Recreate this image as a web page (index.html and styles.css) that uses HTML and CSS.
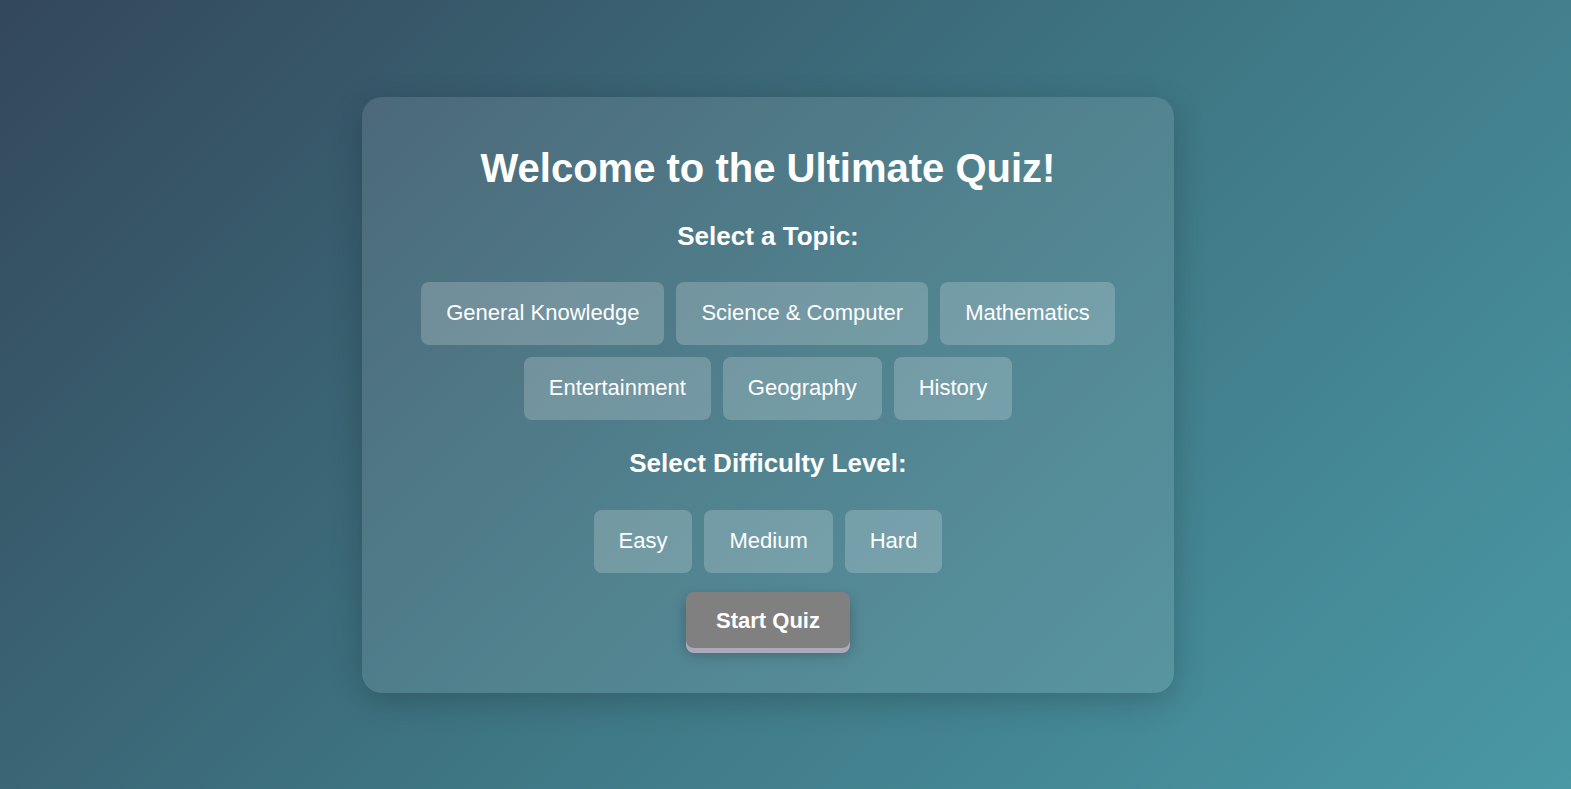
FILE: index.html
```html
<!DOCTYPE html>
<html lang="en">
<head>
<meta charset="utf-8">
<title>Ultimate Quiz</title>
<link rel="stylesheet" href="styles.css">
</head>
<body>
<div class="page">
  <div class="card">
    <h1 class="title">Welcome to the Ultimate Quiz!</h1>
    <h2 class="label">Select a Topic:</h2>
    <div class="options">
      <button class="opt">General Knowledge</button>
      <button class="opt">Science &amp; Computer</button>
      <button class="opt">Mathematics</button>
      <button class="opt">Entertainment</button>
      <button class="opt">Geography</button>
      <button class="opt">History</button>
    </div>
    <h2 class="label label-diff">Select Difficulty Level:</h2>
    <div class="options">
      <button class="opt">Easy</button>
      <button class="opt">Medium</button>
      <button class="opt">Hard</button>
    </div>
    <button class="start">Start Quiz</button>
  </div>
</div>
</body>
</html>
```
FILE: styles.css
```css
html, body {
  margin: 0;
  height: 100%;
}
body {
  background: linear-gradient(135deg, #33475b 0%, #3e7482 50%, #4a98a5 100%);
  font-family: "Liberation Sans", Arial, sans-serif;
  color: #fff;
}
.page {
  height: 100%;
  display: flex;
  align-items: center;
  justify-content: center;
  padding-right: 35px;
  box-sizing: border-box;
}
.card {
  width: 812px;
  box-sizing: border-box;
  padding: 40px;
  border-radius: 20px;
  background: rgba(255, 255, 255, 0.1);
  box-shadow: 0 8px 32px rgba(0, 0, 0, 0.2);
  display: flex;
  flex-direction: column;
  align-items: center;
  text-align: center;
}
.title {
  font-size: 40px;
  line-height: 46px;
  font-weight: bold;
  margin: 8px 0 0;
}
.label {
  font-size: 26px;
  line-height: 30px;
  font-weight: bold;
  margin: 30px 0 31px;
}
.label-diff {
  margin: 28px 0 32px;
}
.options {
  display: flex;
  flex-wrap: wrap;
  justify-content: center;
  gap: 12px;
}
.opt {
  font-family: "Liberation Sans", Arial, sans-serif;
  font-size: 22px;
  line-height: 25px;
  color: #fff;
  background: rgba(255, 255, 255, 0.2);
  border: none;
  border-radius: 8px;
  padding: 18px 25px 20px;
}
.start {
  margin: 19px 0 5px;
  font-family: "Liberation Sans", Arial, sans-serif;
  font-size: 22px;
  font-weight: bold;
  line-height: 24px;
  color: #fff;
  background: #808080;
  border: none;
  border-radius: 8px;
  padding: 17px 30px 15px;
  box-shadow: 0 5px 0 #aba9bb, 0 6px 14px rgba(0, 0, 0, 0.25);
}
```
